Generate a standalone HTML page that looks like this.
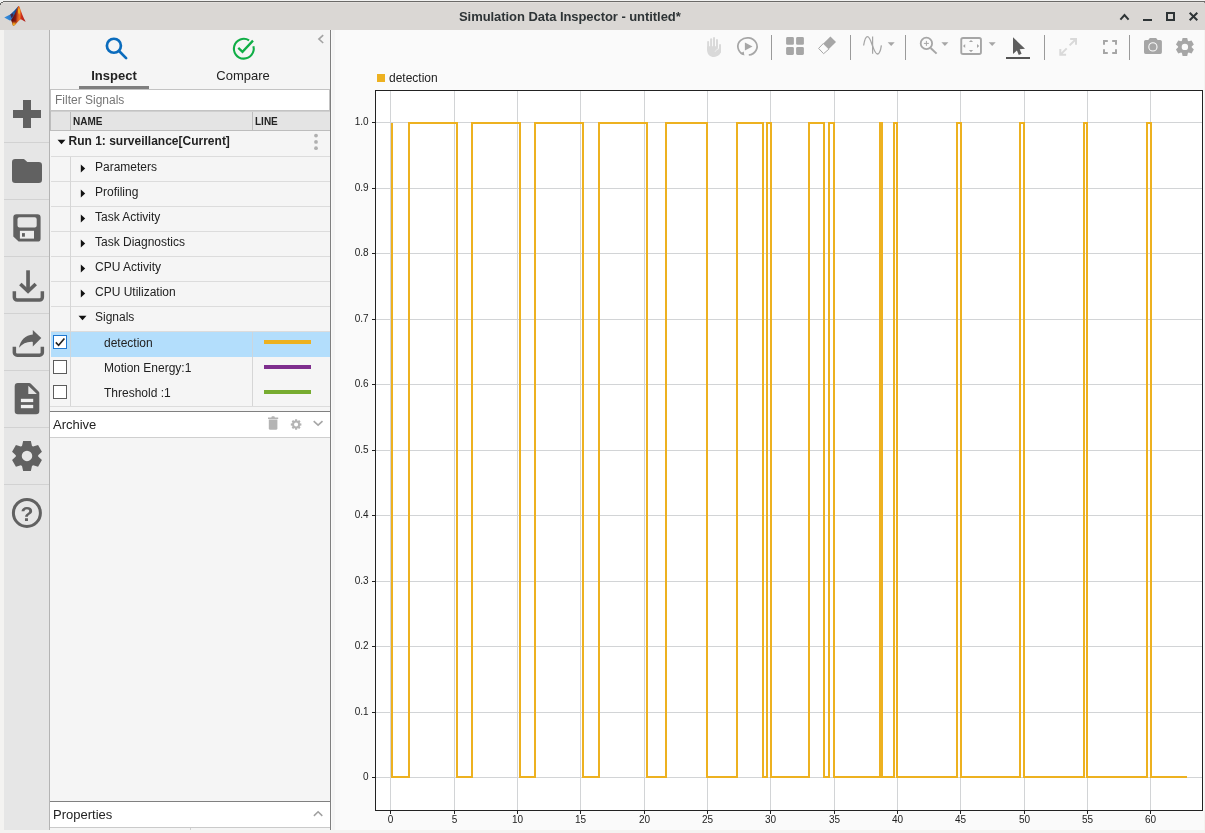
<!DOCTYPE html>
<html lang="en">
<head>
<meta charset="utf-8">
<title>Simulation Data Inspector - untitled*</title>
<style>
html,body{margin:0;padding:0;}
body{width:1205px;height:833px;overflow:hidden;background:#f4f3f1;font-family:"Liberation Sans",Arial,sans-serif;color:#222;position:relative;}
.abs{position:absolute;}
#win{position:absolute;left:0;top:0;width:1205px;height:833px;overflow:hidden;will-change:transform;}
#titlebar{left:0;top:0;width:1205px;height:30px;background:#dad7d4;}
#titleline{left:0;top:0;width:1205px;height:3px;background:linear-gradient(#f2f2f1 0,#f2f2f1 1px,#6b6a68 1px,#6b6a68 2px,#e3e0dd 2px,#e3e0dd 3px);}
#title{left:459px;top:9px;font-family:"Liberation Sans",Arial,sans-serif;font-weight:bold;font-size:13px;line-height:16px;color:#2e3436;letter-spacing:-0.06px;white-space:nowrap;}
#content{left:4px;top:30px;width:1200px;height:800px;background:#fafafa;}
#lbar{left:4px;top:30px;width:45px;height:800px;background:#e6e6e6;}
#lbarb{left:49px;top:30px;width:1px;height:800px;background:#b4b4b4;}
.lsep{left:4px;width:45px;height:1px;background:#d2d2d2;}
#panel{left:50px;top:30px;width:280px;height:800px;background:#f5f5f5;}
#panelb{left:330px;top:30px;width:1px;height:800px;background:#808080;}
#split{left:332px;top:30px;width:3px;height:800px;background:#f5f5f5;}
.tab{font-size:13px;line-height:16px;text-align:center;white-space:nowrap;}
#filter{left:50px;top:89px;width:280px;height:22px;box-sizing:border-box;border:1px solid #c3c3c3;background:#fff;}
#filter span{position:absolute;left:4px;top:2px;font-size:12px;line-height:16px;color:#767676;white-space:nowrap;}
#thead{left:50px;top:111px;width:280px;height:19px;background:#e4e4e4;border-bottom:1px solid #bdbdbd;border-top:1px solid #cfcfcf;box-sizing:content-box;height:18px;}
.th{font-weight:bold;font-size:10px;line-height:12px;color:#222;top:116px;}
.vl{width:1px;background:#d0d0d0;}
.row{left:51px;width:279px;height:24px;border-bottom:1px solid #dcdcdc;}
.rt{font-size:12px;line-height:14px;white-space:nowrap;color:#222;}
.cb{left:53px;width:14px;height:14px;box-sizing:border-box;border:1px solid #5c5c5c;background:#fff;}
.ls{left:264px;width:47px;height:4px;}
.hdr{left:50px;width:280px;background:#fff;}
.hdr span{position:absolute;left:3px;font-size:13px;line-height:16px;color:#222;}
</style>
</head>
<body>
<div id="win">
<div class="abs" id="content"></div>
<div class="abs" id="titlebar"></div>
<div class="abs" id="titleline"></div>
<div class="abs" style="left:0;top:1px;width:3px;height:1px;background:#f2f2f1"></div><div class="abs" style="left:0;top:2px;width:1px;height:1px;background:#f2f2f1"></div><div class="abs" style="left:1px;top:2px;width:2px;height:1px;background:#6b6a68"></div><div class="abs" style="left:0;top:3px;width:1px;height:2px;background:#6b6a68"></div><div class="abs" style="left:1204px;top:2px;width:1px;height:1px;background:#8a8886"></div>
<div class="abs" id="title">Simulation Data Inspector - untitled*</div>
<svg class="abs" style="left:0;top:0" width="1205" height="30" viewBox="0 0 1205 30">
<defs><linearGradient id="mlo" gradientUnits="userSpaceOnUse" x1="11" y1="16" x2="25.5" y2="17.2"><stop offset="0" stop-color="#560a10"/><stop offset="0.32" stop-color="#831810"/><stop offset="0.48" stop-color="#d9581c"/><stop offset="0.6" stop-color="#ec7526"/><stop offset="0.72" stop-color="#cc2e1b"/><stop offset="1" stop-color="#ad1d1a"/></linearGradient><linearGradient id="mlb" gradientUnits="userSpaceOnUse" x1="4" y1="17" x2="16" y2="13"><stop offset="0" stop-color="#3b92df"/><stop offset="0.55" stop-color="#2a78c8"/><stop offset="1" stop-color="#174f93"/></linearGradient><radialGradient id="mly" gradientUnits="userSpaceOnUse" cx="13.9" cy="25.2" r="4.3"><stop offset="0" stop-color="#f8c81c"/><stop offset="0.4" stop-color="#f2a01c" stop-opacity="0.9"/><stop offset="1" stop-color="#ee7a22" stop-opacity="0"/></radialGradient><radialGradient id="mlr" cx="0.5" cy="0.5" r="0.5"><stop offset="0" stop-color="#f8cc1c"/><stop offset="0.55" stop-color="#f4b01c" stop-opacity="0.85"/><stop offset="1" stop-color="#ee7a22" stop-opacity="0"/></radialGradient></defs>
<path d="M4.2 17.5L10.2 14.4C13 12.3 15.6 9.2 17.6 7.1L18.4 6.2L15 15.5L11.3 20.2L9.8 20.6Z" fill="url(#mlb)"/>
<path d="M11.05 19.9C13.4 17.4 15.6 12.6 17.2 8.6C17.7 7.3 18 6.3 18.5 6C19 5.8 19.3 6.3 19.6 7.1C21.2 11.8 23.3 18 25.7 21.7C24 21 22.2 19.8 20.7 19.2C18.2 21 16.2 24 13.9 25.8L12.9 25.5C12.4 23.6 11.8 21.6 11.05 19.9Z" fill="url(#mlo)"/>
<path d="M11.05 19.9C13.4 17.4 15.6 12.6 17.2 8.6C17.7 7.3 18 6.3 18.5 6C19 5.8 19.3 6.3 19.6 7.1C21.2 11.8 23.3 18 25.7 21.7C24 21 22.2 19.8 20.7 19.2C18.2 21 16.2 24 13.9 25.8L12.9 25.5C12.4 23.6 11.8 21.6 11.05 19.9Z" fill="url(#mly)"/>
<ellipse cx="19" cy="11.2" rx="1.25" ry="4.6" fill="url(#mlr)" transform="rotate(-3 19 11.2)"/>
<path d="M10.2 14.6L12.6 13.2L13.6 15.2L11.6 18.2Z" fill="#4a1020" opacity="0.75"/>
<g fill="none" stroke="#2e3436" stroke-width="2">
<path d="M1120.4 19.7L1124.5 15.1L1128.6 19.7"/>
<path d="M1143 20H1152"/>
<rect x="1167" y="13" width="7" height="7"/>
<path d="M1189.7 12.7L1197.3 20.3M1197.3 12.7L1189.7 20.3"/>
</g></svg>
<div class="abs" id="lbar"></div>
<div class="abs" id="lbarb"></div>
<div class="abs lsep" style="top:142px"></div>
<div class="abs lsep" style="top:199px"></div>
<div class="abs lsep" style="top:256px"></div>
<div class="abs lsep" style="top:313px"></div>
<div class="abs lsep" style="top:370px"></div>
<div class="abs lsep" style="top:427px"></div>
<div class="abs lsep" style="top:484px"></div>
<svg class="abs" style="left:0;top:0" width="60" height="560" viewBox="0 0 60 560">
<g fill="#616161">
<path d="M13 110H23V100H31V110H41V118H31V128H23V118H13Z"/>
<path d="M12 162.2a3.2 3.2 0 0 1 3.2-3.2H23.6a1.5 1.5 0 0 1 1 .4L27.3 162H38.8a3.2 3.2 0 0 1 3.2 3.2V179.8a3.2 3.2 0 0 1-3.2 3.2H15.2a3.2 3.2 0 0 1-3.2-3.2Z"/>
<path fill-rule="evenodd" d="M13.3 217.5a3.2 3.2 0 0 1 3.2-3.2H37.4a3.2 3.2 0 0 1 3.2 3.2V238.4a3.2 3.2 0 0 1-3.2 3.2H18.6L13.3 236.6Z M19.5 217.3a2 2 0 0 0-2 2V225.5a2 2 0 0 0 2 2H34.7a2 2 0 0 0 2-2V219.3a2 2 0 0 0-2-2Z"/>
<rect x="19.9" y="230.8" width="14.1" height="7.8" fill="#ededed"/>
<rect x="22" y="233.1" width="2.9" height="3.6"/>
</g>
<g fill="none" stroke="#616161">
<path d="M14.35 291.3V297.2a2.8 2.8 0 0 0 2.8 2.8H39.55a2.8 2.8 0 0 0 2.8-2.8V291.3" stroke-width="3.5"/>
<path d="M28.05 270.3V291.5" stroke-width="3.7"/>
<path d="M20.35 284L28.05 291.3L35.75 284" stroke-width="3.6"/>
<path d="M14.35 346.8V352.4a2.8 2.8 0 0 0 2.8 2.8H39.55a2.8 2.8 0 0 0 2.8-2.8V346.8" stroke-width="3.5"/>
</g>
<g fill="#616161">
<path d="M19 347.8C20.2 340.5 25.5 335 32.8 334.5V329.9L41.3 338.1L32.8 346.4V341.9C27 341.5 22.5 343.6 19 347.8Z"/>
<path d="M14.7 386.3a3.2 3.2 0 0 1 3.2-3.2H29.2a2.5 2.5 0 0 1 1.7.7L38.6 391.4a2.5 2.5 0 0 1 .7 1.7V411.1a3.2 3.2 0 0 1-3.2 3.2H17.9a3.2 3.2 0 0 1-3.2-3.2Z"/>
<path d="M28.3 385.7V394.1H36.9Z" fill="#e6e6e6"/>
<rect x="20.9" y="398.8" width="12.3" height="3.3" fill="#f0f0f0"/>
<rect x="20.9" y="404.9" width="12.3" height="3.3" fill="#f0f0f0"/>
<path fill-rule="evenodd" d="M32.00 445.88L30.85 440.90L23.15 440.90L22.00 445.88L20.82 446.56L15.93 445.07L12.08 451.73L15.82 455.22L15.82 456.58L12.08 460.07L15.93 466.73L20.82 465.24L22.00 465.92L23.15 470.90L30.85 470.90L32.00 465.92L33.18 465.24L38.07 466.73L41.92 460.07L38.18 456.58L38.18 455.22L41.92 451.73L38.07 445.07L33.18 446.56ZM32.25 455.90A5.25 5.25 0 1 0 21.75 455.90A5.25 5.25 0 1 0 32.25 455.90Z"/>
</g>
<circle cx="26.9" cy="512.9" r="13.5" fill="none" stroke="#616161" stroke-width="3"/>
<text x="27" y="520.9" text-anchor="middle" font-family="Liberation Sans, Arial, sans-serif" font-weight="bold" font-size="21" fill="#616161">?</text>
</svg>
<div class="abs" id="panel"></div>
<div class="abs" id="panelb"></div>
<div class="abs" id="split"></div>
<svg class="abs" style="left:50px;top:30px" width="285" height="60" viewBox="50 30 285 60">
<g fill="none" stroke="#0b6cbd" stroke-width="2.7"><circle cx="113.9" cy="45.75" r="7"/><path d="M119.3 51.3L126.1 58.1" stroke-linecap="round"/></g>
<g fill="none" stroke="#10ae46"><path d="M249.05 40.30A9.9 9.9 0 1 0 253.41 46.30" stroke-width="2.1"/><path d="M238.3 47.9L242.5 51.9L253 40.6" stroke-width="2.3"/></g>
<path d="M323.2 35.2L318.9 39.1L323.2 43" fill="none" stroke="#a3a3a3" stroke-width="1.6"/>
</svg>
<div class="abs tab" style="left:84px;top:68px;width:60px;font-weight:bold;">Inspect</div>
<div class="abs" style="left:79px;top:86px;width:70px;height:3px;background:#7f7f7f"></div>
<div class="abs tab" style="left:203px;top:68px;width:80px;">Compare</div>
<div class="abs" id="filter"><span>Filter Signals</span></div>
<div class="abs" id="thead"></div>
<div class="abs vl" style="left:50px;top:111px;height:20px;background:#bdbdbd"></div>
<div class="abs vl" style="left:70px;top:112px;height:18px;background:#bdbdbd"></div>
<div class="abs vl" style="left:252px;top:112px;height:18px;background:#bdbdbd"></div>
<div class="abs th" style="left:73px;">NAME</div>
<div class="abs th" style="left:255px;">LINE</div>
<div class="abs row" style="top:131px;height:25px"></div>
<div class="abs rt" style="left:68.5px;top:134px;font-weight:bold">Run 1: surveillance[Current]</div>
<svg class="abs" style="left:57px;top:139px" width="9" height="6" viewBox="0 0 9 6"><path d="M0.5 0.8H8.5L4.5 5.2Z" fill="#111"/></svg>
<svg class="abs" style="left:313px;top:133px" width="6" height="18" viewBox="0 0 6 18"><g fill="#b0b0b0"><circle cx="3" cy="2.6" r="1.9"/><circle cx="3" cy="8.9" r="1.9"/><circle cx="3" cy="15.2" r="1.9"/></g></svg>
<div class="abs row" style="top:157px"></div>
<div class="abs rt" style="left:95px;top:160px">Parameters</div>
<svg class="abs" style="left:80px;top:164px" width="6" height="9" viewBox="0 0 6 9"><path d="M0.8 0.5V8.5L5.2 4.5Z" fill="#111"/></svg>
<div class="abs row" style="top:182px"></div>
<div class="abs rt" style="left:95px;top:185px">Profiling</div>
<svg class="abs" style="left:80px;top:189px" width="6" height="9" viewBox="0 0 6 9"><path d="M0.8 0.5V8.5L5.2 4.5Z" fill="#111"/></svg>
<div class="abs row" style="top:207px"></div>
<div class="abs rt" style="left:95px;top:210px">Task Activity</div>
<svg class="abs" style="left:80px;top:214px" width="6" height="9" viewBox="0 0 6 9"><path d="M0.8 0.5V8.5L5.2 4.5Z" fill="#111"/></svg>
<div class="abs row" style="top:232px"></div>
<div class="abs rt" style="left:95px;top:235px">Task Diagnostics</div>
<svg class="abs" style="left:80px;top:239px" width="6" height="9" viewBox="0 0 6 9"><path d="M0.8 0.5V8.5L5.2 4.5Z" fill="#111"/></svg>
<div class="abs row" style="top:257px"></div>
<div class="abs rt" style="left:95px;top:260px">CPU Activity</div>
<svg class="abs" style="left:80px;top:264px" width="6" height="9" viewBox="0 0 6 9"><path d="M0.8 0.5V8.5L5.2 4.5Z" fill="#111"/></svg>
<div class="abs row" style="top:282px"></div>
<div class="abs rt" style="left:95px;top:285px">CPU Utilization</div>
<svg class="abs" style="left:80px;top:289px" width="6" height="9" viewBox="0 0 6 9"><path d="M0.8 0.5V8.5L5.2 4.5Z" fill="#111"/></svg>
<div class="abs row" style="top:307px"></div>
<div class="abs rt" style="left:95px;top:310px">Signals</div>
<svg class="abs" style="left:78px;top:315px" width="9" height="6" viewBox="0 0 9 6"><path d="M0.5 0.8H8.5L4.5 5.2Z" fill="#111"/></svg>
<div class="abs" style="left:51px;top:332px;width:279px;height:25px;background:#b3defc"></div>
<div class="abs" style="left:50px;top:406px;width:280px;height:1px;background:#dcdcdc"></div>
<div class="abs rt" style="left:104px;top:336px">detection</div>
<div class="abs ls" style="top:340px;background:#edb120"></div>
<div class="abs cb" style="top:335px;border-color:#1f77cf"></div>
<svg class="abs" style="left:53px;top:335px" width="14" height="14" viewBox="0 0 14 14"><path d="M2.8 7.4L5.6 10.2L11.4 3.4" stroke="#222" stroke-width="1.6" fill="none"/></svg>
<div class="abs rt" style="left:104px;top:361px">Motion Energy:1</div>
<div class="abs ls" style="top:365px;background:#7e2f8e"></div>
<div class="abs cb" style="top:360px"></div>
<div class="abs rt" style="left:104px;top:386px">Threshold :1</div>
<div class="abs ls" style="top:390px;background:#77ac30"></div>
<div class="abs cb" style="top:385px"></div>
<div class="abs vl" style="left:70px;top:157px;height:175px;background:#d6d6d6"></div>
<div class="abs vl" style="left:70px;top:332px;height:25px;background:#cbd6de"></div>
<div class="abs vl" style="left:70px;top:357px;height:49px;background:#d6d6d6"></div>
<div class="abs vl" style="left:252px;top:332px;height:25px;background:#cbd6de"></div>
<div class="abs vl" style="left:252px;top:357px;height:49px;background:#d6d6d6"></div>
<div class="abs" style="left:50px;top:411px;width:280px;height:1px;background:#808080"></div>
<div class="abs hdr" style="top:412px;height:25px;border-bottom:1px solid #cfcfcf"><span style="top:5px">Archive</span></div>
<div class="abs" style="left:50px;top:801px;width:280px;height:1px;background:#808080"></div>
<div class="abs hdr" style="top:802px;height:25px;border-bottom:1px solid #cacaca"><span style="top:5px">Properties</span></div>
<div class="abs vl" style="left:190px;top:828px;height:2px;background:#d0d0d0"></div>
<svg class="abs" style="left:260px;top:412px" width="70" height="416" viewBox="260 412 70 416">
<g fill="#b4b4b4"><path d="M268 417.6H271.3L271.9 416.3H274.3L274.9 417.6H278.2V419.1H268Z"/><path d="M268.8 419.4H277.4V428.2a1.5 1.5 0 0 1-1.5 1.5H270.3a1.5 1.5 0 0 1-1.5-1.5Z"/>
<path fill-rule="evenodd" d="M297.45 420.73L297.05 419.20L295.15 419.20L294.75 420.73L294.39 420.88L293.02 420.08L291.68 421.42L292.48 422.79L292.33 423.15L290.80 423.55L290.80 425.45L292.33 425.85L292.48 426.21L291.68 427.58L293.02 428.92L294.39 428.12L294.75 428.27L295.15 429.80L297.05 429.80L297.45 428.27L297.81 428.12L299.18 428.92L300.52 427.58L299.72 426.21L299.87 425.85L301.40 425.45L301.40 423.55L299.87 423.15L299.72 422.79L300.52 421.42L299.18 420.08L297.81 420.88ZM298.15 424.50A2.05 2.05 0 1 0 294.05 424.50A2.05 2.05 0 1 0 298.15 424.50Z"/></g>
<path d="M313.7 421.1L318.1 425.1L322.5 421.1" fill="none" stroke="#a6a6a6" stroke-width="1.6"/>
<path d="M313.9 815.9L318.1 811.8L322.3 815.9" fill="none" stroke="#a0a0a0" stroke-width="1.5"/>
</svg>
<svg id="chart" width="1205" height="833" viewBox="0 0 1205 833" style="position:absolute;left:0;top:0">
<rect x="375.5" y="90.5" width="827" height="720" fill="#fff" stroke="none"/>
<path d="M390.5 91V810M454.5 91V810M517.5 91V810M580.5 91V810M644.5 91V810M707.5 91V810M770.5 91V810M834.5 91V810M897.5 91V810M960.5 91V810M1024.5 91V810M1087.5 91V810M1150.5 91V810M376 122.5H1202M376 188.5H1202M376 253.5H1202M376 319.5H1202M376 384.5H1202M376 450.5H1202M376 515.5H1202M376 581.5H1202M376 646.5H1202M376 712.5H1202M376 777.5H1202" stroke="#d2d4d6" stroke-width="1" fill="none" shape-rendering="crispEdges"/>
<path d="M392 123V777H409V123H457V777H472V123H520V777H535V123H583V777H599V123H647V777H666V123H707V777H737V123H763V777H767V123H771V777H809V123H824V777H829V123H834V777H880V123H882V777H894V123H897V777H957V123H961V777H1020V123H1024V777H1084V123H1087V777H1147V123H1151V777H1187" stroke="#edb120" stroke-width="2" fill="none" stroke-linejoin="miter"/>
<rect x="375.5" y="90.5" width="827" height="720" fill="none" stroke="#222" stroke-width="1" shape-rendering="crispEdges"/>
<path d="M390.5 811V814M454.5 811V814M517.5 811V814M580.5 811V814M644.5 811V814M707.5 811V814M770.5 811V814M834.5 811V814M897.5 811V814M960.5 811V814M1024.5 811V814M1087.5 811V814M1150.5 811V814M372 122.5H375M372 188.5H375M372 253.5H375M372 319.5H375M372 384.5H375M372 450.5H375M372 515.5H375M372 581.5H375M372 646.5H375M372 712.5H375M372 777.5H375" stroke="#222" stroke-width="1" fill="none" shape-rendering="crispEdges"/>
<g font-family="Liberation Sans, Arial, sans-serif" font-size="10" fill="#222">
<text x="390.5" y="822.6" text-anchor="middle">0</text>
<text x="454.5" y="822.6" text-anchor="middle">5</text>
<text x="517.5" y="822.6" text-anchor="middle">10</text>
<text x="580.5" y="822.6" text-anchor="middle">15</text>
<text x="644.5" y="822.6" text-anchor="middle">20</text>
<text x="707.5" y="822.6" text-anchor="middle">25</text>
<text x="770.5" y="822.6" text-anchor="middle">30</text>
<text x="834.5" y="822.6" text-anchor="middle">35</text>
<text x="897.5" y="822.6" text-anchor="middle">40</text>
<text x="960.5" y="822.6" text-anchor="middle">45</text>
<text x="1024.5" y="822.6" text-anchor="middle">50</text>
<text x="1087.5" y="822.6" text-anchor="middle">55</text>
<text x="1150.5" y="822.6" text-anchor="middle">60</text>
<text x="368.6" y="125.0" text-anchor="end">1.0</text>
<text x="368.6" y="191.0" text-anchor="end">0.9</text>
<text x="368.6" y="256.0" text-anchor="end">0.8</text>
<text x="368.6" y="322.0" text-anchor="end">0.7</text>
<text x="368.6" y="387.0" text-anchor="end">0.6</text>
<text x="368.6" y="453.0" text-anchor="end">0.5</text>
<text x="368.6" y="518.0" text-anchor="end">0.4</text>
<text x="368.6" y="584.0" text-anchor="end">0.3</text>
<text x="368.6" y="649.0" text-anchor="end">0.2</text>
<text x="368.6" y="715.0" text-anchor="end">0.1</text>
<text x="368.6" y="780.0" text-anchor="end">0</text>
</g>
<rect x="377" y="74" width="8" height="8" fill="#edb120"/>
<text x="389" y="81.6" font-family="Liberation Sans, Arial, sans-serif" font-size="12" fill="#222">detection</text>
</svg>
<svg class="abs" style="left:700px;top:30px" width="505" height="36" viewBox="700 30 505 36">
<g fill="#d9d9d9"><rect x="707.15" y="41" width="1.95" height="10" rx="0.95"/><rect x="710.1" y="38.2" width="2" height="12" rx="1"/><rect x="713.05" y="37.1" width="1.95" height="13" rx="0.95"/><rect x="716" y="39.1" width="1.95" height="12" rx="0.95"/><rect x="719.05" y="44" width="1.95" height="9" rx="0.95"/><path d="M707.15 46.2H717.95V48.6H721V50.6C721 54.4 718 56.9 714 56.9C710 56.9 707.15 54.2 707.15 50.4Z"/></g>
<path d="M715.2 51.6C715.7 50.2 717 49.6 718.2 49.2V47.6" fill="none" stroke="#fafafa" stroke-width="0.7"/>
<path d="M748.79 55.02A9.6 8.65 0 1 0 743.24 54.22" fill="none" stroke="#a6a6a6" stroke-width="1.7"/>
<path d="M744.9 42.4V50.4L752.5 46.4Z" fill="#a6a6a6"/>
<path d="M739.9 53.8L743.7 51.6L744.4 55.5Z" fill="#a6a6a6"/>
<rect x="771" y="35" width="1" height="25" fill="#9a9a9a"/>
<rect x="850" y="35" width="1" height="25" fill="#9a9a9a"/>
<rect x="905" y="35" width="1" height="25" fill="#9a9a9a"/>
<rect x="1044" y="35" width="1" height="25" fill="#9a9a9a"/>
<rect x="1129" y="35" width="1" height="25" fill="#9a9a9a"/>
<rect x="786.1" y="37" width="7.8" height="7.8" rx="1.4" fill="#a6a6a6"/>
<rect x="796.1" y="37" width="7.8" height="7.8" rx="1.4" fill="#a6a6a6"/>
<rect x="786.1" y="47.1" width="7.8" height="7.8" rx="1.4" fill="#a6a6a6"/>
<rect x="796.1" y="47.1" width="7.8" height="7.8" rx="1.4" fill="#a6a6a6"/>
<path d="M830.4 36.4L836 42L828.9 49.1L823.3 43.5Z" fill="#a6a6a6"/>
<path d="M823.3 43.5L828.9 49.1L823.6 53.7L818.6 48.4Z" fill="#fcfcfc" stroke="#a6a6a6" stroke-width="1"/>
<path d="M863.6 45.5C864.5 40 866 36.6 867.6 36.6C869.6 36.6 870.8 41 872.4 45.5C874 50 875.4 54 877.4 54C879.2 54 880.6 50.5 881.4 45.3" fill="none" stroke="#a6a6a6" stroke-width="1.3"/>
<path d="M872.6 36.4V53.8" fill="none" stroke="#a6a6a6" stroke-width="1.2"/>
<path d="M887.7 42.3H894.7L891.2 46Z" fill="#a6a6a6"/>
<path d="M941.4 42.3H948.4L944.9 46Z" fill="#a6a6a6"/>
<path d="M988.7 42.3H995.7L992.2 46Z" fill="#a6a6a6"/>
<g fill="none" stroke="#a6a6a6"><circle cx="926.4" cy="43.4" r="5.7" stroke-width="1.8"/><path d="M930.6 47.9L936.6 53.6" stroke-width="2"/><path d="M923.9 43.4H928.9M926.4 40.9V45.9" stroke-width="1"/></g>
<rect x="961.25" y="37.95" width="19.7" height="16" rx="1.8" fill="none" stroke="#a6a6a6" stroke-width="1.9"/>
<g fill="#a6a6a6"><path d="M968.9 42.1H973.1L971 39.9Z"/><path d="M968.9 50.1H973.1L971 52.3Z"/><path d="M965.2 43.9V48.1L963 46Z"/><path d="M977 43.9V48.1L979.2 46Z"/></g>
<path d="M1013 37.3V54.1L1016.9 50.5L1018.8 55L1021.6 53.8L1019.7 49.3L1025 48.7Z" fill="#5e5e5e"/>
<rect x="1006" y="57" width="24" height="2" fill="#555"/>
<g fill="none" stroke="#d9d9d9" stroke-width="2"><path d="M1069.6 45.4L1075.8 39.2M1070.2 39H1076V44.8"/><path d="M1066.7 48.4L1060.5 54.6M1066.1 54.8H1060.3V49"/></g>
<path d="M1104 44.8V41H1107.8M1112.2 41H1116V44.8M1116 49.2V53H1112.2M1107.8 53H1104V49.2" fill="none" stroke="#a6a6a6" stroke-width="2"/>
<path d="M1144 41.6a1.6 1.6 0 0 1 1.6-1.6H1148.3L1149.3 38.4a1 1 0 0 1 .8-.4H1155.8a1 1 0 0 1 .8.4L1157.6 40H1160.3a1.6 1.6 0 0 1 1.6 1.6V52.3a1.6 1.6 0 0 1-1.6 1.6H1145.6a1.6 1.6 0 0 1-1.6-1.6Z" fill="#a6a6a6"/>
<circle cx="1152.9" cy="46.9" r="4.1" fill="none" stroke="#fafafa" stroke-width="1.1"/>
<path fill-rule="evenodd" d="M1187.90 40.80L1187.20 37.90L1182.60 37.90L1181.90 40.80L1181.12 41.25L1178.26 40.41L1175.96 44.39L1178.12 46.45L1178.12 47.35L1175.96 49.41L1178.26 53.39L1181.12 52.55L1181.90 53.00L1182.60 55.90L1187.20 55.90L1187.90 53.00L1188.68 52.55L1191.54 53.39L1193.84 49.41L1191.68 47.35L1191.68 46.45L1193.84 44.39L1191.54 40.41L1188.68 41.25ZM1188.10 46.90A3.2 3.2 0 1 0 1181.70 46.90A3.2 3.2 0 1 0 1188.10 46.90Z" fill="#a6a6a6"/>
</svg>
</div>
</body>
</html>
